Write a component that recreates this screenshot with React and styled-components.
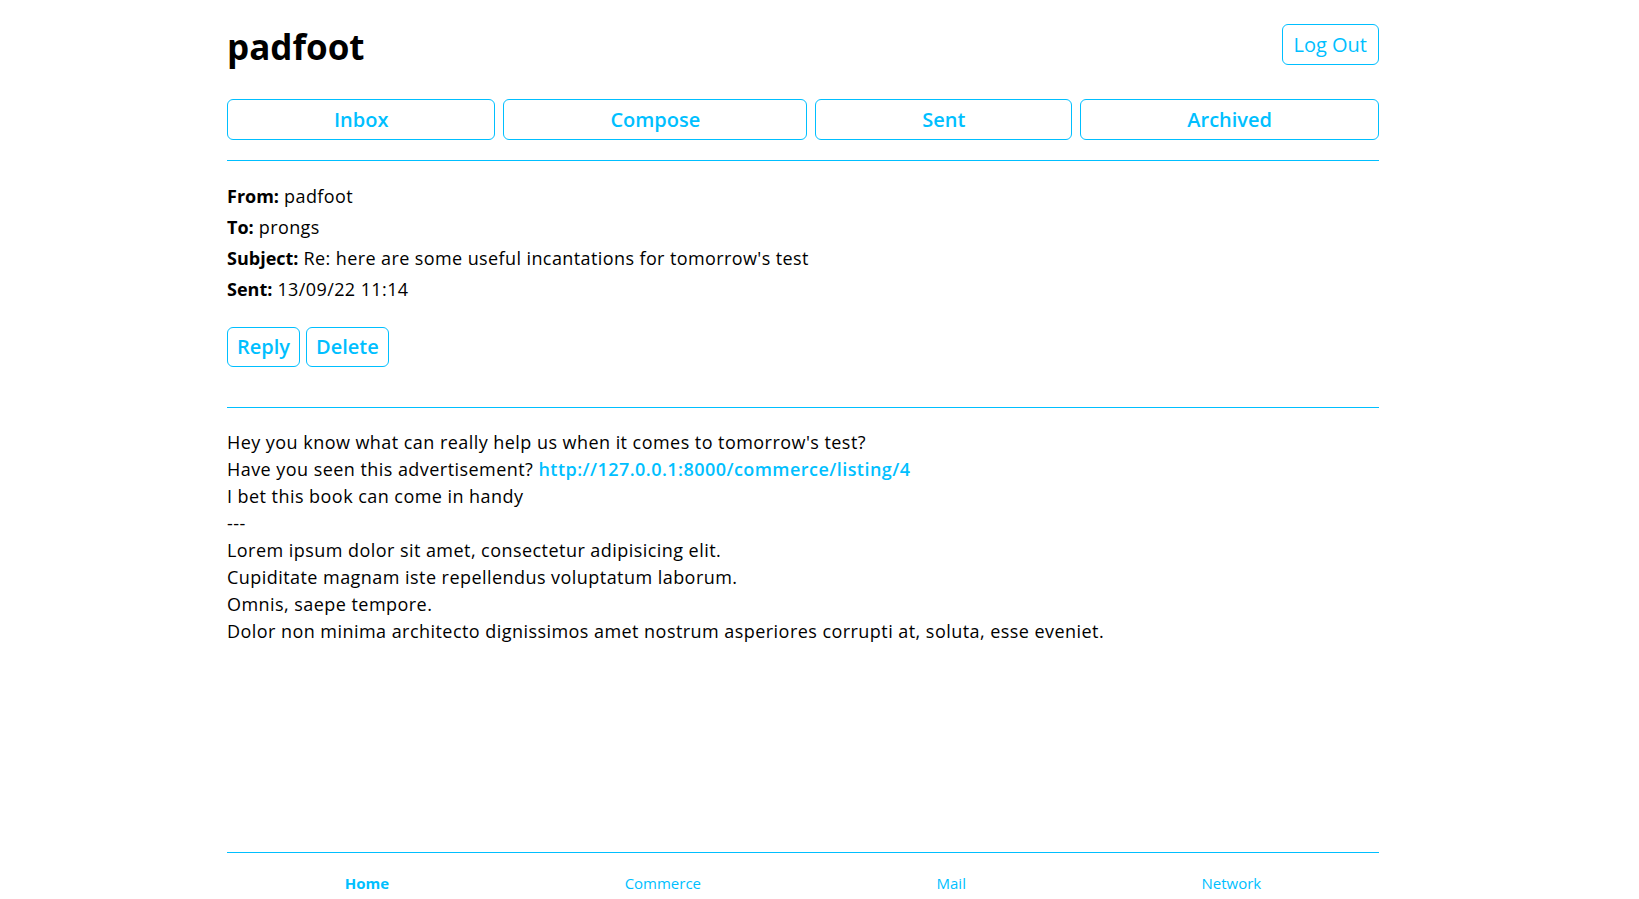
import React from "react";
import styled, { createGlobalStyle } from "styled-components";

const accent = "#00bfff";

const GlobalStyle = createGlobalStyle`
  html, body { margin: 0; padding: 0; background: #fff; }
  body {
    font-family: "Segoe UI", "Open Sans", "Noto Sans", sans-serif;
    font-size: 18px;
    color: #000;
  }
  * { box-sizing: border-box; }
`;

const Page = styled.div`
  min-height: 100vh;
  width: 1152px;
  margin-left: 227px;
  display: flex;
  flex-direction: column;
`;

const Header = styled.header`
  display: flex;
  justify-content: space-between;
  align-items: flex-start;
  padding-top: 24px;
`;

const Title = styled.h1`
  margin: 1px 0 0;
  font-size: 35px;
  line-height: 43px;
  font-weight: 700;
`;

const OutlineButton = styled.button`
  font-family: inherit;
  background: #fff;
  color: ${accent};
  border: 1px solid ${accent};
  border-radius: 6px;
  font-size: 20px;
  font-weight: ${(p) => (p.$light ? 400 : 600)};
  cursor: pointer;
`;

const LogOutButton = styled(OutlineButton)`
  padding: 6px 11px;
  line-height: 27px;
  height: 41px;
`;

const Tabs = styled.nav`
  display: flex;
  gap: 8px;
  margin-top: 31px;
`;

const TabButton = styled(OutlineButton)`
  flex: 1 1 auto;
  padding: 6px 12px;
  line-height: 27px;
  height: 41px;
`;

const Rule = styled.hr`
  border: none;
  border-top: 1px solid ${accent};
  margin: ${(p) => p.$mt}px 0 0;
`;

const Meta = styled.div`
  padding-top: 20px;
`;

const MetaRow = styled.div`
  line-height: 31px;
  letter-spacing: 0.4px;
`;

const Label = styled.span`
  font-weight: 700;
  letter-spacing: 0;
`;

const Actions = styled.div`
  display: flex;
  gap: 6px;
  margin-top: 22px;
`;

const ActionButton = styled(OutlineButton)`
  padding: 6px 9px;
  line-height: 26px;
  height: 40px;
`;

const Body = styled.div`
  margin-top: 21px;
  line-height: 27px;
  letter-spacing: 0.45px;
`;

const Link = styled.a`
  color: ${accent};
  font-weight: 600;
  text-decoration: none;
`;

const Footer = styled.footer`
  margin-top: auto;
  border-top: 1px solid ${accent};
  display: flex;
  justify-content: space-around;
  padding: 20px 0 6px;
`;

const FooterLink = styled.a`
  color: ${accent};
  font-size: 15px;
  line-height: 20px;
  font-weight: ${(p) => (p.$active ? 700 : 400)};
  text-decoration: none;
`;

const bodyLines = [
  "Hey you know what can really help us when it comes to tomorrow's test?",
  null,
  "I bet this book can come in handy",
  "---",
  "Lorem ipsum dolor sit amet, consectetur adipisicing elit.",
  "Cupiditate magnam iste repellendus voluptatum laborum.",
  "Omnis, saepe tempore.",
  "Dolor non minima architecto dignissimos amet nostrum asperiores corrupti at, soluta, esse eveniet.",
];

export default function App() {
  return (
    <>
      <GlobalStyle />
      <Page>
        <Header>
          <Title>padfoot</Title>
          <LogOutButton $light>Log Out</LogOutButton>
        </Header>
        <Tabs>
          <TabButton>Inbox</TabButton>
          <TabButton>Compose</TabButton>
          <TabButton>Sent</TabButton>
          <TabButton>Archived</TabButton>
        </Tabs>
        <Rule $mt={20} />
        <Meta>
          <MetaRow>
            <Label>From:</Label> padfoot
          </MetaRow>
          <MetaRow>
            <Label>To:</Label> prongs
          </MetaRow>
          <MetaRow>
            <Label>Subject:</Label> Re: here are some useful incantations for tomorrow's test
          </MetaRow>
          <MetaRow>
            <Label>Sent:</Label> 13/09/22 11:14
          </MetaRow>
        </Meta>
        <Actions>
          <ActionButton>Reply</ActionButton>
          <ActionButton>Delete</ActionButton>
        </Actions>
        <Rule $mt={40} />
        <Body>
          {bodyLines.map((line, i) =>
            line === null ? (
              <div key={i}>
                Have you seen this advertisement?{" "}
                <Link href="#">http://127.0.0.1:8000/commerce/listing/4</Link>
              </div>
            ) : (
              <div key={i}>{line}</div>
            )
          )}
        </Body>
        <Footer>
          <FooterLink $active href="#">Home</FooterLink>
          <FooterLink href="#">Commerce</FooterLink>
          <FooterLink href="#">Mail</FooterLink>
          <FooterLink href="#">Network</FooterLink>
        </Footer>
      </Page>
    </>
  );
}
